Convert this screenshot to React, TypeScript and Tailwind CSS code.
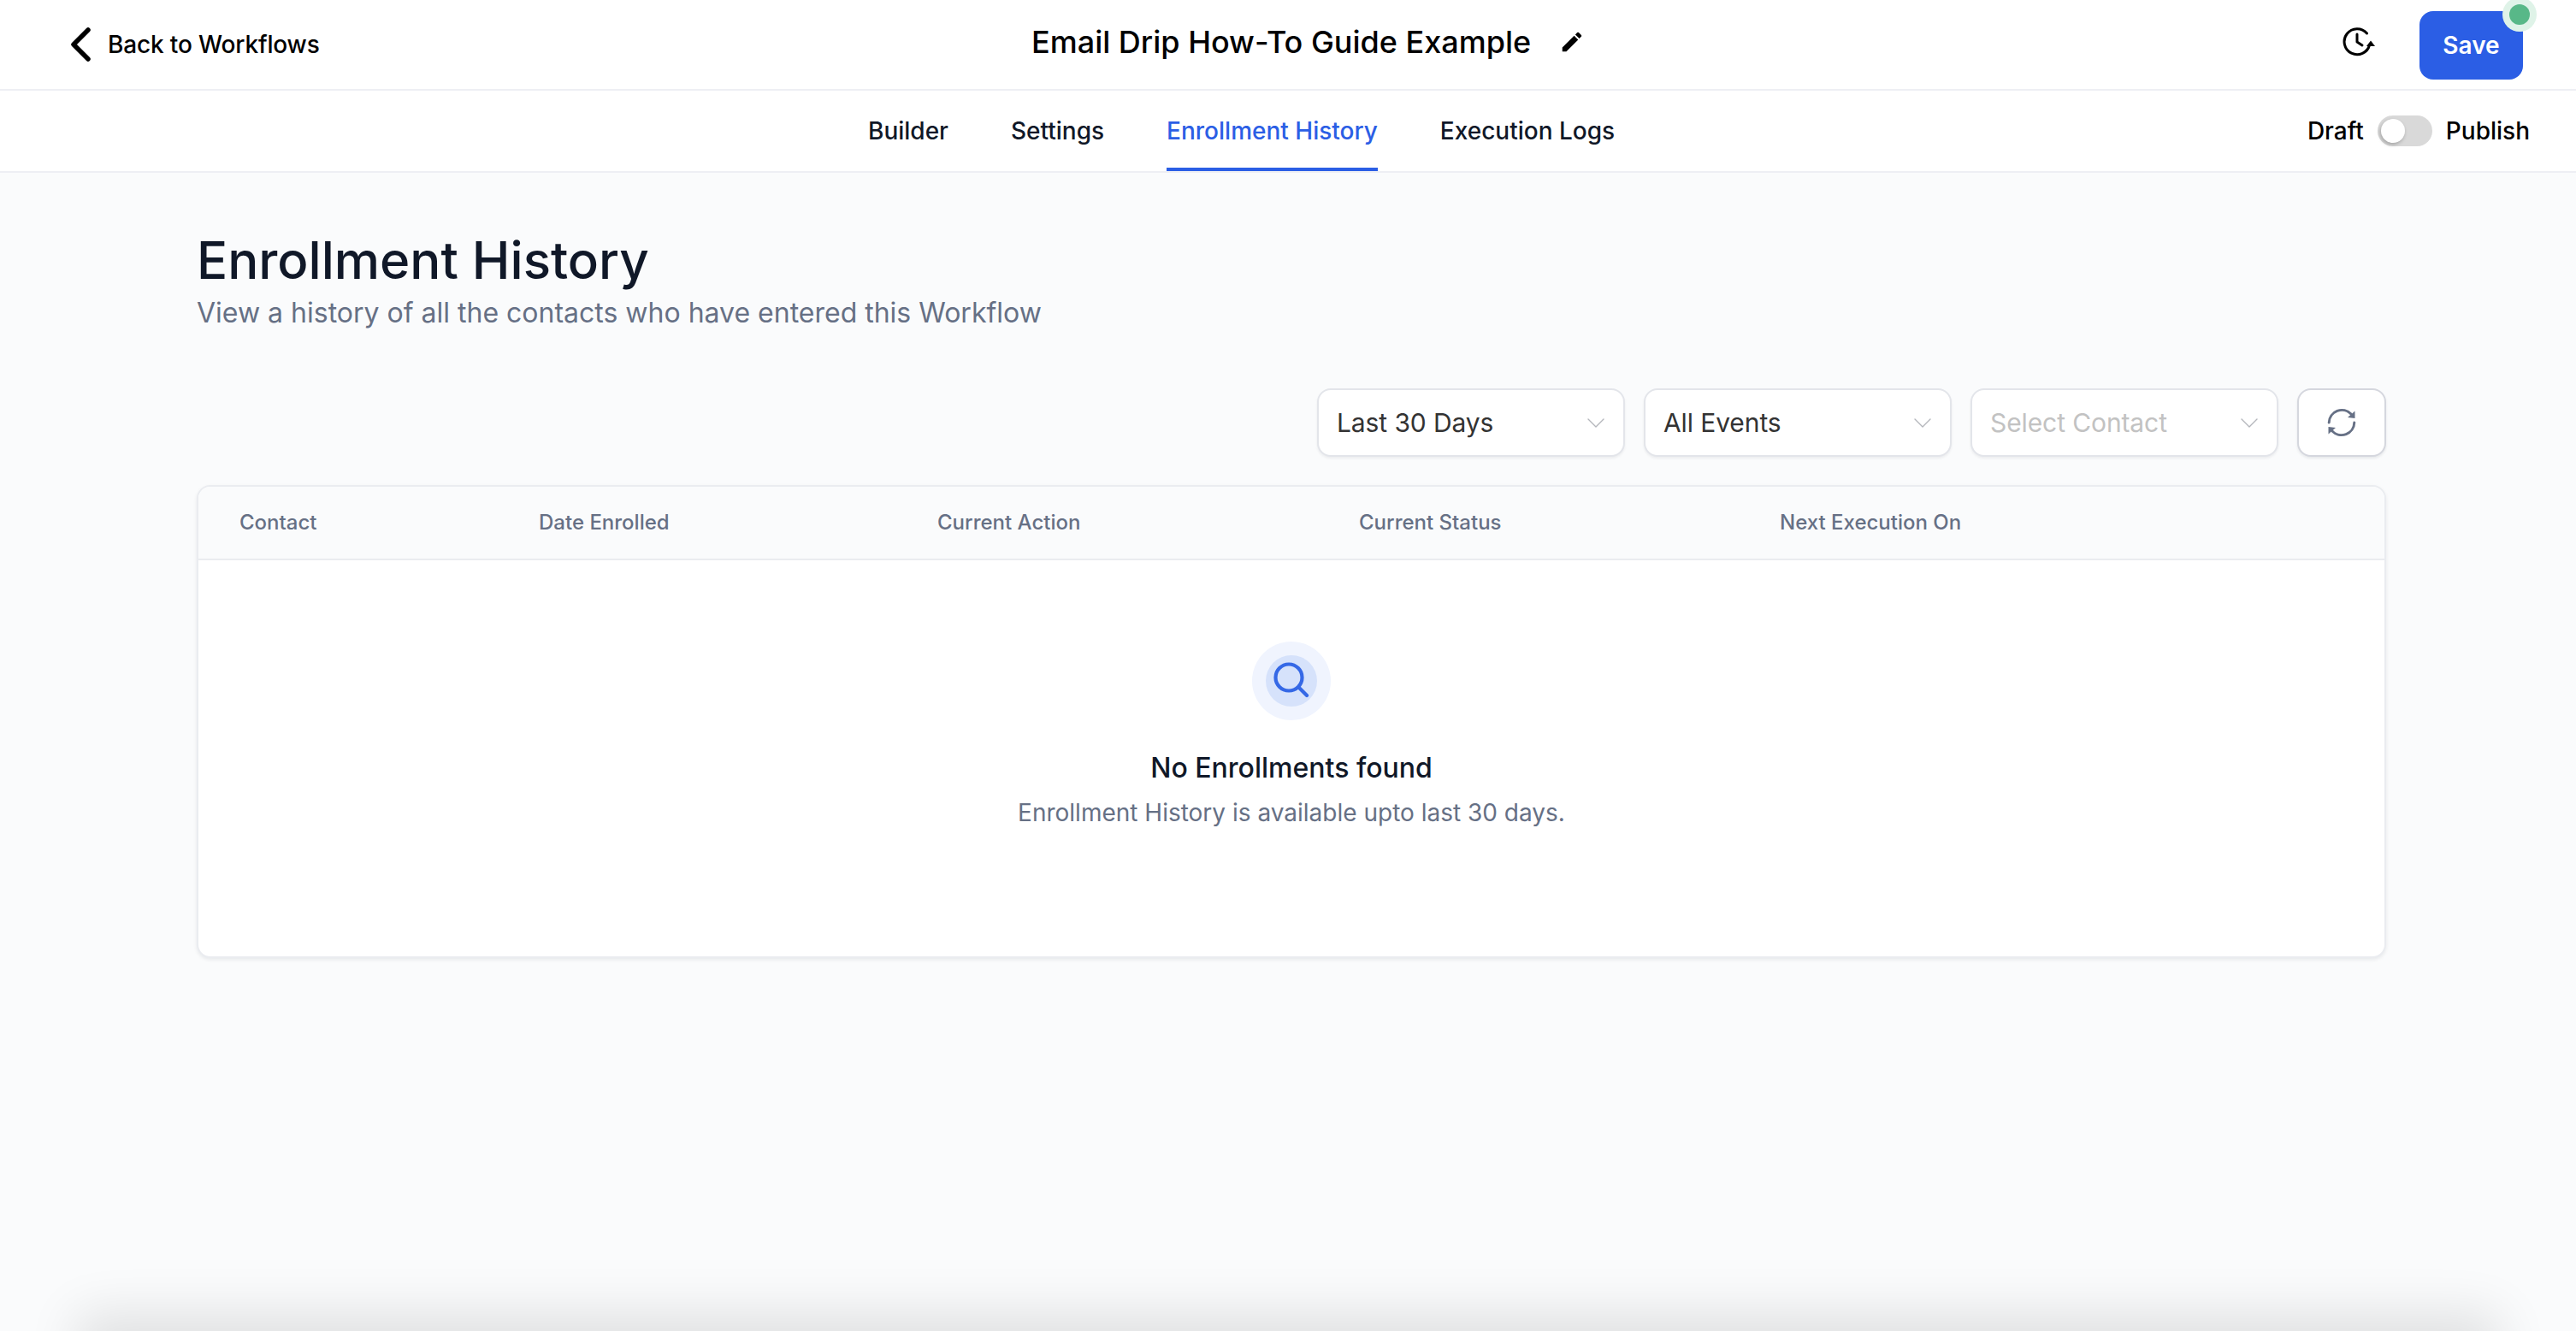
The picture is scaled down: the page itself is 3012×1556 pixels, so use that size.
const FONT = "font-['Inter','Noto_Sans',sans-serif]";

function Chevron() {
  return (
    <svg width="20" height="11" viewBox="0 0 20 11" fill="none" stroke="#b4b6bc" strokeWidth="1.4" className="shrink-0">
      <path d="M1 1l9 9 9-9" strokeLinecap="round" strokeLinejoin="round" />
    </svg>
  );
}

function Select({ label, muted }: { label: string; muted?: boolean }) {
  return (
    <div className="flex h-[80px] w-[360px] items-center justify-between rounded-[16px] border-2 border-[#e3e5ea] bg-white pl-[21px] pr-[22px] shadow-[0_2px_3px_rgba(16,24,40,0.06)]">
      <span className={`text-[30px] tracking-[-0.1px] ${muted ? "text-[#c2c2c2]" : "text-[#333333]"}`}>{label}</span>
      <Chevron />
    </div>
  );
}

const columns: [string, string][] = [
  ["Contact", "w-[350px]"],
  ["Date Enrolled", "w-[466px]"],
  ["Current Action", "w-[493px]"],
  ["Current Status", "w-[492px]"],
  ["Next Execution On", ""],
];

export default function App() {
  return (
    <div className={`relative h-[1556px] w-full overflow-hidden bg-[#fafbfc] ${FONT}`}>
      <header className="flex h-[106px] items-center border-b-2 border-[#eeeff4] bg-white">
        <div className="flex w-[1206px] items-center gap-[18px] pl-[80px]">
          <svg width="28" height="42" viewBox="0 0 28 42" fill="none" stroke="#000" strokeWidth="5.5" strokeLinecap="round" strokeLinejoin="round">
            <path d="M23 4L6 21l17 17" />
          </svg>
          <span className="text-[28px] font-medium tracking-[-0.15px] text-black">Back to Workflows</span>
        </div>
        <h2 className="-mt-[6px] text-[36px] font-medium text-black">Email Drip How-To Guide Example</h2>
        <svg width="30" height="30" viewBox="0 0 24 24" fill="#000" className="-mt-[6px] ml-[33px]">
          <path d="M3 17.25V21h3.75L17.81 9.94l-3.75-3.75L3 17.25zM20.71 7.04a1 1 0 000-1.41l-2.34-2.34a1 1 0 00-1.41 0l-1.83 1.83 3.75 3.75 1.83-1.83z" />
        </svg>
        <div className="ml-auto flex items-center gap-[50px] pr-[62px]">
          <svg width="40" height="36" viewBox="0 0 40 36" fill="none" stroke="#000" strokeWidth="3" strokeLinecap="round" strokeLinejoin="round" className="-mt-[6px]">
            <path d="M28.5 8A15 15 0 1 0 31.6 21.5" />
            <path d="M17 9v9l6 4" />
            <path d="M28 23l5-6.5 5 6.5z" fill="#000" stroke="none" />
          </svg>
          <div className="relative mt-[2px]">
            <button className="flex h-[80px] w-[121px] items-center justify-center rounded-[16px] bg-[#2b5ee5] text-[28px] font-semibold text-white">
              Save
            </button>
            <span className="absolute right-[-16px] top-[-16px] h-[40px] w-[40px] rounded-full bg-[#dff3e8]" />
            <span className="absolute right-[-8px] top-[-8px] h-[24px] w-[24px] rounded-full bg-[#58b888]" />
          </div>
        </div>
      </header>

      <nav className="relative flex h-[96px] items-center border-b-2 border-[#eeeff4] bg-white">
        <div className="flex h-full w-full items-stretch gap-[73px] pl-[1015px]">
          <div className="flex items-center text-[28px] font-medium text-[#101828]">Builder</div>
          <div className="flex items-center text-[28px] font-medium text-[#101828]">Settings</div>
          <div className="flex items-center border-b-4 border-[#2b5ee5] pt-[4px] text-[28px] font-medium text-[#2b5ee5]">Enrollment History</div>
          <div className="flex items-center text-[28px] font-medium text-[#101828]">Execution Logs</div>
        </div>
        <div className="absolute right-[54px] top-0 flex h-full items-center gap-[16px] text-[28px] font-medium text-black">
          <span>Draft</span>
          <span className="flex h-[36px] w-[64px] items-center rounded-full bg-[#d9d9d9] pl-[4px]">
            <span className="h-[28px] w-[28px] rounded-full bg-white shadow-[-1px_2px_4px_rgba(0,0,0,0.25)]" />
          </span>
          <span>Publish</span>
        </div>
      </nav>

      <main className="pl-[230px] pr-[222px] pt-[64px]">
        <h1 className="text-[60px] font-medium leading-[76px] text-[#101828]">Enrollment History</h1>
        <p className="mt-[2px] text-[32px] leading-[44px] text-[#667085]">View a history of all the contacts who have entered this Workflow</p>

        <div className="mt-[66px] flex items-center justify-end gap-[22px]">
          <Select label="Last 30 Days" />
          <Select label="All Events" />
          <Select label="Select Contact" muted />
          <div className="flex h-[80px] w-[104px] items-center justify-center rounded-[16px] border-2 border-[#d5d7de] bg-white shadow-[0_2px_3px_rgba(16,24,40,0.08)]">
            <svg width="44" height="44" viewBox="0 0 44 44" fill="none" stroke="#667085" strokeWidth="3" strokeLinecap="round">
              <path d="M7.2 22A15 15 0 0 1 33 12" />
              <path d="M37.5 8.5V17l-8.5-1z" fill="#667085" stroke="none" />
              <path d="M36.8 22A15 15 0 0 1 11 32" />
              <path d="M6.5 35.5V27l8.5 1z" fill="#667085" stroke="none" />
            </svg>
          </div>
        </div>

        <section className="mt-[33px] h-[553px] overflow-hidden rounded-[16px] border-2 border-[#eaecf0] bg-white shadow-[0_2px_4px_rgba(16,24,40,0.08)]">
          <div className="flex h-[86px] items-center border-b-2 border-[#eaecf0] bg-[#fafbfc] pl-[48px] text-[24px] font-medium text-[#667085]">
            {columns.map(([name, width]) => (
              <div key={name} className={width}>{name}</div>
            ))}
          </div>
          <div className="flex flex-col items-center pt-[95px]">
            <div className="flex h-[92px] w-[92px] items-center justify-center rounded-full bg-[#f0f4fe]">
              <div className="flex h-[60px] w-[60px] items-center justify-center rounded-full bg-[#d6e2fb]">
                <svg width="44" height="44" viewBox="0 0 44 44" fill="none" stroke="#3568e6" strokeWidth="4.2" strokeLinecap="round">
                  <circle cx="19" cy="18" r="15.5" />
                  <path d="M30.5 29.5L40 39" />
                </svg>
              </div>
            </div>
            <div className="mt-[34px] text-[32px] font-medium leading-[44px] text-[#101828]">No Enrollments found</div>
            <div className="mt-[8px] text-[28px] leading-[44px] text-[#667085]">Enrollment History is available upto last 30 days.</div>
          </div>
        </section>
      </main>

      <div className="absolute bottom-[-40px] left-[110px] right-[110px] h-[40px] shadow-[0_0_60px_20px_rgba(0,0,0,0.11)]" />
    </div>
  );
}
